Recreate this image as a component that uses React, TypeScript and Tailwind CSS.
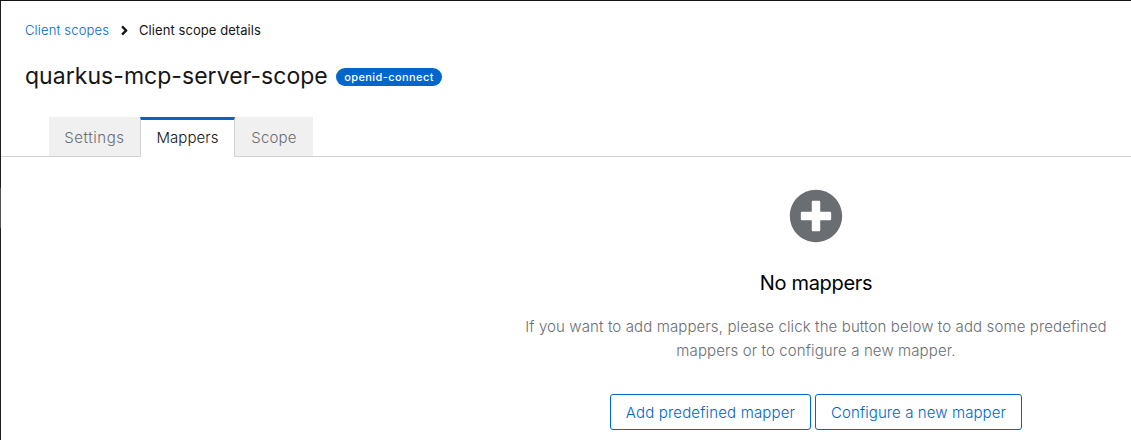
import { FaAngleRight, FaPlusCircle } from "react-icons/fa";

const tab = "flex h-[39px] items-center pt-[3px] text-[15px] leading-6";

export default function App() {
  return (
    <div className="flex h-[440px] w-[1131px] overflow-hidden border-t border-[#151515] bg-white font-['Inter','Liberation_Sans',sans-serif] text-[#151515]">
      <div className="w-px shrink-0 bg-[#1b1d21] pt-[187px]">
        <div className="h-10 bg-[#4f5255]" />
      </div>
      <main className="min-w-0 flex-1">
        <nav className="mt-[19px] flex h-[21px] items-center pl-6 text-[13px] leading-[21px] whitespace-nowrap">
          <a className="w-[84px] tracking-[0.16px] text-[#0066cc] font-[350]">Client scopes</a>
          <FaAngleRight className="mr-[7px] ml-[8px] size-[15px]" />
          <span className="tracking-[0.07px] font-[370]">Client scope details</span>
        </nav>
        <header className="mt-[19px] flex h-[31px] items-center pl-6 whitespace-nowrap">
          <h1 className="w-[303px] pt-0.5 text-[23px] leading-[31px] tracking-[0.04px]">quarkus-mcp-server-scope</h1>
          <span className="ml-2 mt-[3px] flex h-[18px] w-[106px] items-center justify-center rounded-full bg-[#0066cc] text-[11px] font-medium tracking-[0.4px] text-white">
            openid-connect
          </span>
        </header>
        <div className="mt-[26px] flex h-10 border-b border-[#d2d2d2] pl-12 whitespace-nowrap">
          <div className={`${tab} w-[91px] justify-center bg-[#f0f0f0] tracking-[0.55px] text-[#6a6e73] font-[350]`}>Settings</div>
          <div className="flex h-10 w-[95px] items-center justify-center border-x border-t-3 border-x-[#d2d2d2] border-t-[#0066cc] bg-white pb-px text-[15px] tracking-[0.05px] font-[350]">
            Mappers
          </div>
          <div className={`${tab} w-[78px] justify-center bg-[#f0f0f0] tracking-[0.2px] text-[#6a6e73] font-[350]`}>Scope</div>
        </div>
        <section className="ml-[515px] flex w-[600px] flex-col items-center pt-8">
          <FaPlusCircle className="size-[54px] text-[#6a6e73]" />
          <h2 className="mt-[25px] text-xl leading-[30px] tracking-[-0.3px] text-black">No mappers</h2>
          <p className="mt-[17px] text-center text-[15px] leading-6 tracking-[0.115px] whitespace-nowrap text-[#6a6e73] font-[350]">
            If you want to add mappers, please click the button below to add some predefined
            <br />
            mappers or to configure a new mapper.
          </p>
          <div className="mt-[31px] flex gap-1 text-[15px] whitespace-nowrap text-[#0066cc] font-[350]">
            <button className="h-9 w-[201px] rounded-[3px] border border-[#0066cc] pt-0.5 tracking-[0.17px]">Add predefined mapper</button>
            <button className="h-9 w-[207px] rounded-[3px] border border-[#0066cc] pt-0.5 tracking-[0.1px]">Configure a new mapper</button>
          </div>
        </section>
      </main>
    </div>
  );
}
